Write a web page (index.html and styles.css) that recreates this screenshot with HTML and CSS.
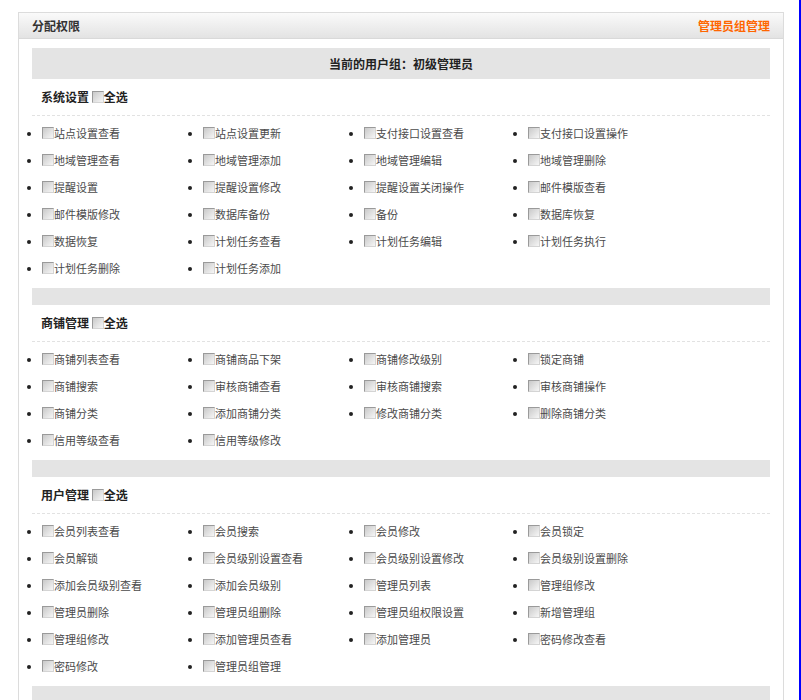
FILE: index.html
```html
<!DOCTYPE html>
<html lang="zh-CN">
<head>
<meta charset="utf-8">
<title>分配权限</title>
<link rel="stylesheet" href="styles.css">
</head>
<body>
<div class="page">
  <div class="panel">
    <div class="panel-head">
      <span class="panel-title">分配权限</span>
      <a class="panel-link" href="#">管理员组管理</a>
    </div>
    <div class="panel-body">
      <div class="band band-main">当前的用户组：初级管理员</div>
      <div class="sec-title">系统设置 <label><input type="checkbox">全选</label></div>
      <ul class="perm-list">
        <li><input type="checkbox">站点设置查看</li>
        <li><input type="checkbox">站点设置更新</li>
        <li><input type="checkbox">支付接口设置查看</li>
        <li><input type="checkbox">支付接口设置操作</li>
        <li><input type="checkbox">地域管理查看</li>
        <li><input type="checkbox">地域管理添加</li>
        <li><input type="checkbox">地域管理编辑</li>
        <li><input type="checkbox">地域管理删除</li>
        <li><input type="checkbox">提醒设置</li>
        <li><input type="checkbox">提醒设置修改</li>
        <li><input type="checkbox">提醒设置关闭操作</li>
        <li><input type="checkbox">邮件模版查看</li>
        <li><input type="checkbox">邮件模版修改</li>
        <li><input type="checkbox">数据库备份</li>
        <li><input type="checkbox">备份</li>
        <li><input type="checkbox">数据库恢复</li>
        <li><input type="checkbox">数据恢复</li>
        <li><input type="checkbox">计划任务查看</li>
        <li><input type="checkbox">计划任务编辑</li>
        <li><input type="checkbox">计划任务执行</li>
        <li><input type="checkbox">计划任务删除</li>
        <li><input type="checkbox">计划任务添加</li>
      </ul>
      <div class="band"></div>
      <div class="sec-title">商铺管理 <label><input type="checkbox">全选</label></div>
      <ul class="perm-list">
        <li><input type="checkbox">商铺列表查看</li>
        <li><input type="checkbox">商铺商品下架</li>
        <li><input type="checkbox">商铺修改级别</li>
        <li><input type="checkbox">锁定商铺</li>
        <li><input type="checkbox">商铺搜索</li>
        <li><input type="checkbox">审核商铺查看</li>
        <li><input type="checkbox">审核商铺搜索</li>
        <li><input type="checkbox">审核商铺操作</li>
        <li><input type="checkbox">商铺分类</li>
        <li><input type="checkbox">添加商铺分类</li>
        <li><input type="checkbox">修改商铺分类</li>
        <li><input type="checkbox">删除商铺分类</li>
        <li><input type="checkbox">信用等级查看</li>
        <li><input type="checkbox">信用等级修改</li>
      </ul>
      <div class="band"></div>
      <div class="sec-title">用户管理 <label><input type="checkbox">全选</label></div>
      <ul class="perm-list">
        <li><input type="checkbox">会员列表查看</li>
        <li><input type="checkbox">会员搜索</li>
        <li><input type="checkbox">会员修改</li>
        <li><input type="checkbox">会员锁定</li>
        <li><input type="checkbox">会员解锁</li>
        <li><input type="checkbox">会员级别设置查看</li>
        <li><input type="checkbox">会员级别设置修改</li>
        <li><input type="checkbox">会员级别设置删除</li>
        <li><input type="checkbox">添加会员级别查看</li>
        <li><input type="checkbox">添加会员级别</li>
        <li><input type="checkbox">管理员列表</li>
        <li><input type="checkbox">管理组修改</li>
        <li><input type="checkbox">管理员删除</li>
        <li><input type="checkbox">管理员组删除</li>
        <li><input type="checkbox">管理员组权限设置</li>
        <li><input type="checkbox">新增管理组</li>
        <li><input type="checkbox">管理组修改</li>
        <li><input type="checkbox">添加管理员查看</li>
        <li><input type="checkbox">添加管理员</li>
        <li><input type="checkbox">密码修改查看</li>
        <li><input type="checkbox">密码修改</li>
        <li><input type="checkbox">管理员组管理</li>
      </ul>
      <div class="band"></div>
    </div>
  </div>
</div>
</body>
</html>
```
FILE: styles.css
```css
html, body {
  margin: 0;
  padding: 0;
  background: #ffffff;
}
body {
  font-family: "Noto Sans CJK SC", "Noto Sans", sans-serif;
  font-size: 12px;
  color: #333;
  overflow: hidden;
}
.page {
  width: 781px;
  height: 688px;
  padding: 12px 0 0 18px;
  border-right: 2px solid #0000ff;
  overflow: hidden;
}
.panel {
  width: 764px;
  border: 1px solid #dcdcdc;
  border-bottom: none;
  min-height: 700px;
}
.panel-head {
  height: 25px;
  line-height: 25px;
  padding: 0 13px;
  display: flex;
  justify-content: space-between;
  background: linear-gradient(#fafafa, #e3e3e3);
  border-bottom: 1px solid #d9d9d9;
  font-weight: bold;
}
.panel-title {
  color: #333;
}
.panel-link {
  color: #ff6600;
  text-decoration: none;
}
.panel-body {
  padding: 9px 13px 0;
}
.band {
  height: 17px;
  background: #e4e4e4;
}
.band-main {
  height: 31px;
  line-height: 31px;
  text-align: center;
  font-weight: bold;
  color: #222;
}
.sec-title {
  padding: 8px 0 8px 9px;
  line-height: 20px;
  font-weight: bold;
  color: #222;
  border-bottom: 1px dashed #e2e2e2;
}
.sec-title label {
  font-weight: bold;
}
input[type="checkbox"] {
  -webkit-appearance: none;
  appearance: none;
  width: 12px;
  height: 12px;
  margin: 0;
  box-sizing: border-box;
  border: 1px solid;
  border-color: #9a9a9a #d4d4d4 #d4d4d4 #9a9a9a;
  background: linear-gradient(135deg, #c9c9c9, #f6f6f6);
  vertical-align: -1px;
}
.perm-list {
  display: grid;
  grid-template-columns: 161px 161px 164px 161px;
  margin: 0 0 6px;
  padding: 4px 0 0 10px;
  list-style: disc outside;
}
.perm-list li {
  display: list-item;
  height: 27px;
  line-height: 27px;
  font-size: 11px;
  color: #4a4a4a;
  white-space: nowrap;
}
.perm-list li::marker {
  color: #222;
}
```
